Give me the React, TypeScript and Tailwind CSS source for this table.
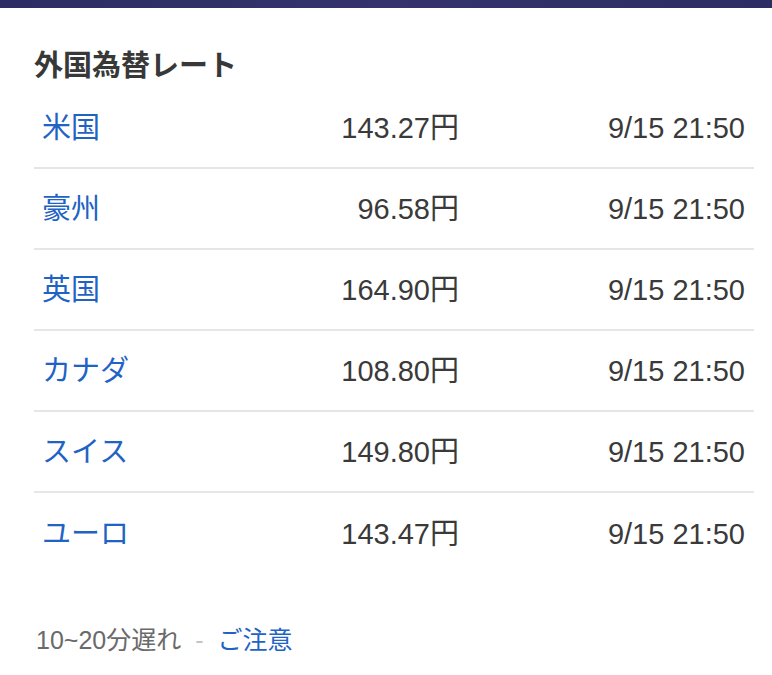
const rates = [
  { name: '米国', price: '143.27円', time: '9/15 21:50' },
  { name: '豪州', price: '96.58円', time: '9/15 21:50' },
  { name: '英国', price: '164.90円', time: '9/15 21:50' },
  { name: 'カナダ', price: '108.80円', time: '9/15 21:50' },
  { name: 'スイス', price: '149.80円', time: '9/15 21:50' },
  { name: 'ユーロ', price: '143.47円', time: '9/15 21:50' },
];

export default function App() {
  return (
    <div
      className="w-[772px] h-[675px] bg-white overflow-hidden"
      style={{ fontFamily: '"Liberation Sans", "Noto Sans CJK JP", sans-serif' }}
    >
      <div className="h-2 bg-gradient-to-r from-[#2b2d63] via-[#34336e] to-[#2b2d63]" />
      <div className="ml-[34px] mr-[18px]">
        <h2 className="pt-[38px] mb-[2px] text-[29px] leading-[40px] font-bold text-[#383838]">
          外国為替レート
        </h2>
        <ul>
          {rates.map((r, i) => (
            <li
              key={r.name}
              className={`flex items-center h-[81px] pl-2 pr-[9px] text-[29px] leading-[36px] ${
                i < rates.length - 1 ? 'border-b-2 border-[#e6e6e6]' : ''
              }`}
            >
              <div className="w-[417px] flex justify-between">
                <a className="text-[#1f63c4]">{r.name}</a>
                <span className="text-[#3a3a3a]">{r.price}</span>
              </div>
              <span className="flex-1 text-right text-[#3a3a3a]">{r.time}</span>
            </li>
          ))}
        </ul>
        <p className="mt-[50px] pl-[2px] text-[25px] leading-[32px] text-[#6a6a6a]">
          10~20分遅れ
          <span className="mx-[14px] text-[#c4c4c4]">-</span>
          <a className="text-[#1f63c4]">ご注意</a>
        </p>
      </div>
    </div>
  );
}
